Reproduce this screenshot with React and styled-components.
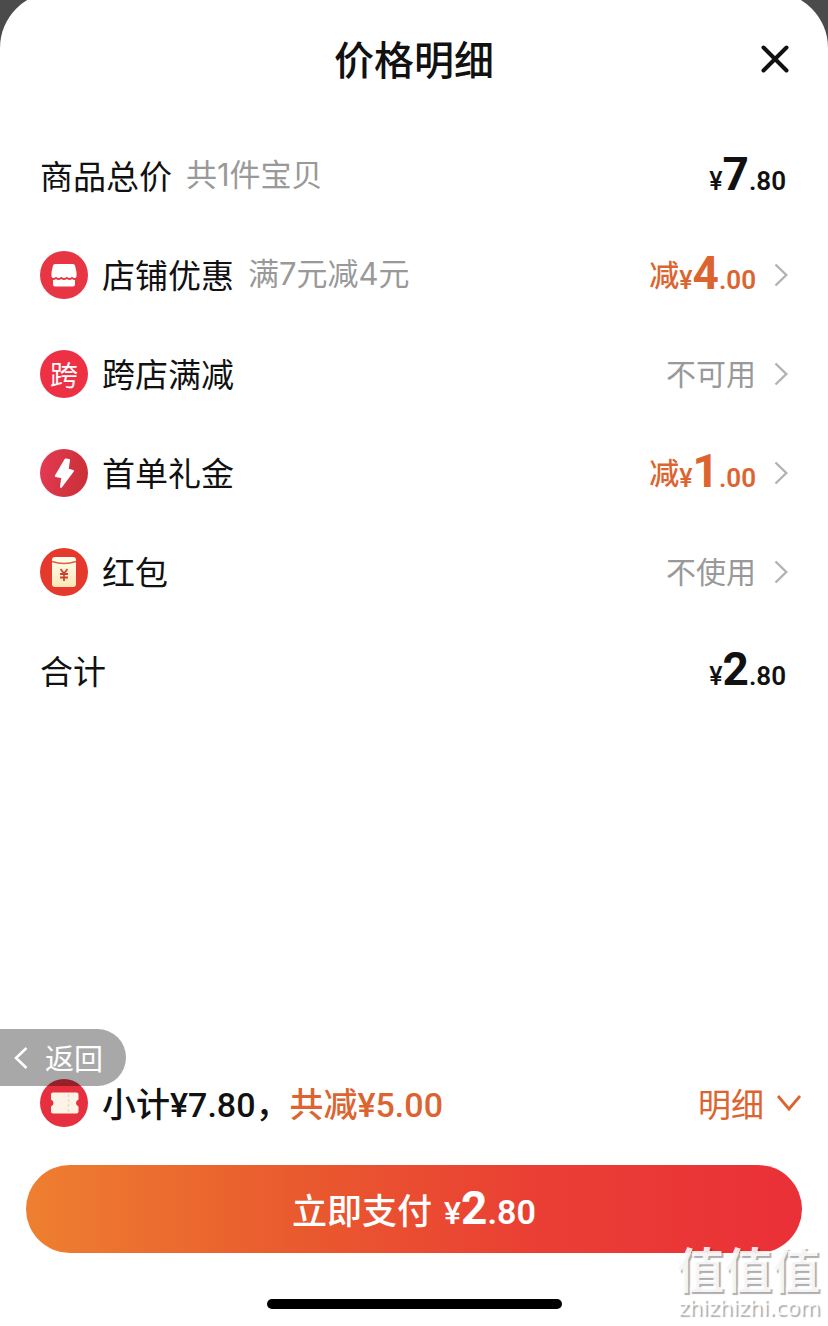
import styled, { createGlobalStyle } from "styled-components";

const GlobalStyle = createGlobalStyle`
  * {
    box-sizing: border-box;
  }

  body {
    margin: 0;
    background: #4b4b4b;
    color: #111;
    font-family: "Noto Sans CJK SC", sans-serif;
  }

  button {
    border: none;
    padding: 0;
    background: none;
    color: inherit;
    font-family: inherit;
    cursor: pointer;
  }
`;

const rows = [
  { label: "商品总价", note: "共1件宝贝", price: ["7", "80"] },
  { icon: "shop", label: "店铺优惠", note: "满7元减4元", off: ["4", "00"] },
  { icon: "cross", label: "跨店满减", status: "不可用" },
  { icon: "bolt", label: "首单礼金", off: ["1", "00"] },
  { icon: "packet", label: "红包", status: "不使用" },
  { label: "合计", price: ["2", "80"] },
];

const ShopIcon = () => (
  <svg width="48" height="48" viewBox="0 0 48 48" aria-hidden="true">
    <path
      d="M15 13h18q1.500 0 2 1.500l1.500 6.500v4q0 2-1.500 2-2 0-3-1.200-1.200 1.200-2.500 1.200t-2.600-1.200Q25.500 27 24 27t-2.700-1.200Q20 27 18.500 27T16 25.800Q15 27 13 27q-1.500 0-1.500-2v-4l1.500-6.500q.5-1.500 2-1.500z"
      fill="#fff"
    />
    <path
      d="M13 29q2 0 3-1 1.200 1 2.500 1t2.800-1q1.200 1 2.700 1t2.900-1q1.300 1 2.600 1t2.500-1q1 1 3 1v4.500q0 2-2 2H15q-2 0-2-2z"
      fill="#fff"
    />
  </svg>
);

const BoltIcon = () => (
  <svg width="48" height="48" viewBox="0 0 48 48" aria-hidden="true">
    <path
      d="M25.500 10.500 15.800 27l6.500 1.200L21 38 33 22l-5.400-1.500L29 11z"
      fill="#fff"
      stroke="#fff"
      strokeWidth="2"
      strokeLinejoin="round"
    />
  </svg>
);

const PacketIcon = () => (
  <svg width="48" height="48" viewBox="0 0 48 48" aria-hidden="true">
    <defs>
      <linearGradient id="packet" x1="0" y1="0" x2="0" y2="1">
        <stop offset="0" stopColor="#fffdf3" />
        <stop offset="1" stopColor="#fbe7b3" />
      </linearGradient>
    </defs>
    <rect x="12" y="9" width="24" height="30" rx="3" fill="url(#packet)" />
    <path d="M12 13.500q12 4 24 0" fill="none" stroke="#d9623f" strokeWidth="1.500" />
    <path
      d="m20.500 21 3.500 4.500 3.500-4.500M24 25.500V33M20 26h8M20 29.500h8"
      fill="none"
      stroke="#c9452f"
      strokeWidth="1.800"
    />
  </svg>
);

const TicketIcon = () => (
  <svg width="48" height="48" viewBox="0 0 48 48" aria-hidden="true">
    <path
      d="M13 13.500h23.500q2 0 2 2v5q-2.500 1-2.500 3.500t2.500 3.500v5q0 2-2 2H13q-2 0-2-2v-5q2.500-1 2.500-3.500T11 20.500v-5q0-2 2-2z"
      fill="#fdf3e6"
    />
    <path d="M28.500 15v18" stroke="#f0d9c9" strokeWidth="1.500" strokeDasharray="3 2" />
  </svg>
);

const Chevron = () => (
  <svg width="14" height="24" viewBox="0 0 14 24" aria-hidden="true">
    <path d="M1.500 1.500 12.300 12 1.500 22.500" fill="none" stroke="#b2b2b2" strokeWidth="2.400" />
  </svg>
);

const icons = {
  shop: <ShopIcon />,
  cross: "跨",
  bolt: <BoltIcon />,
  packet: <PacketIcon />,
};

const Price = ({ value, small }) => (
  <Amount>
    <Yen $small={small}>¥</Yen>
    <Whole>{value[0]}</Whole>
    <Cents $small={small}>.{value[1]}</Cents>
  </Amount>
);

const PriceRow = ({ row }) => {
  const content = (
    <>
      {row.icon && <Badge $tone={row.icon}>{icons[row.icon]}</Badge>}
      <Label>{row.label}</Label>
      {row.note && <Note>{row.note}</Note>}
      <Value>
        {row.status && <Status>{row.status}</Status>}
        {row.off && (
          <Discount>
            <Off>减</Off>
            <Price value={row.off} small />
          </Discount>
        )}
        {row.price && <Price value={row.price} small />}
        {row.icon && <Chevron />}
      </Value>
    </>
  );

  return <Item>{row.icon ? <RowButton type="button">{content}</RowButton> : <Row>{content}</Row>}</Item>;
};

const App = () => {
  return (
    <>
      <GlobalStyle />
      <Page>
        <Sheet>
          <Header>
            <Title>价格明细</Title>
            <Close type="button" aria-label="关闭">
              <svg width="28" height="28" viewBox="0 0 28 28" aria-hidden="true">
                <path d="m2.500 2.500 23 23m0-23-23 23" stroke="#111" strokeWidth="4" strokeLinecap="round" />
              </svg>
            </Close>
          </Header>
          <List>
            {rows.map((row) => (
              <PriceRow key={row.label} row={row} />
            ))}
          </List>
          <Footer>
            <Summary>
              <Badge $tone="ticket">
                <TicketIcon />
              </Badge>
              <Subtotal>小计¥7.80，</Subtotal>
              <Saved>共减¥5.00</Saved>
              <Detail type="button">
                明细
                <svg width="26" height="18" viewBox="0 0 26 18" aria-hidden="true">
                  <path d="m2 2 11 13L24 2" fill="none" stroke="#dc6430" strokeWidth="2.800" />
                </svg>
              </Detail>
            </Summary>
            <Pay type="button">
              立即支付
              <Price value={["2", "80"]} />
            </Pay>
            <HomeBar />
          </Footer>
        </Sheet>
        <Back type="button">
          <svg width="14" height="24" viewBox="0 0 14 24" aria-hidden="true">
            <path d="M12.500 2 2 12l10.500 10" fill="none" stroke="#fff" strokeWidth="2.600" />
          </svg>
          返回
        </Back>
        <Watermark>
          <Mark>值值值</Mark>
          <Site>zhizhizhi.com</Site>
        </Watermark>
      </Page>
    </>
  );
};

export default App;

const Page = styled.div`
  position: relative;
  display: flex;
  min-height: 100vh;
  overflow: hidden;
`;

const Sheet = styled.main`
  flex: 1;
  display: flex;
  flex-direction: column;
  margin-top: -8px;
  background: #fff;
  border-radius: 56px 56px 0 0;
`;

const Header = styled.header`
  display: grid;
  grid-template-columns: 1fr auto 1fr;
  align-items: center;
  height: 134px;
  padding: 0 39px;
`;

const Title = styled.h1`
  grid-column: 2;
  margin: 0;
  padding-bottom: 2px;
  font-size: 40px;
  font-weight: 500;
  line-height: 56px;
`;

const Close = styled.button`
  justify-self: end;
  display: flex;
`;

const List = styled.ul`
  margin: 0;
  padding: 0;
  list-style: none;
`;

const Item = styled.li`
  height: 99px;
`;

const Row = styled.div`
  display: flex;
  align-items: center;
  width: 100%;
  height: 100%;
  padding: 0 42px 0 40px;
`;

const RowButton = styled(Row).attrs({ as: "button" })`
  padding: 0 40px;
  text-align: left;
`;

const tones = {
  shop: "#e73543",
  cross: "#ee3044",
  bolt: "linear-gradient(100deg, #e43a54, #c92f35)",
  packet: "#e4392c",
  ticket: "#e6303f",
};

const Badge = styled.span`
  flex: none;
  display: flex;
  align-items: center;
  justify-content: center;
  width: 48px;
  height: 48px;
  margin-right: 14px;
  border-radius: 50%;
  background: ${(props) => tones[props.$tone]};
  color: #fff;
  font-size: 28px;
  line-height: 48px;
`;

const Label = styled.span`
  padding-bottom: 2px;
  font-size: 33px;
  line-height: 48px;
`;

const Note = styled.span`
  margin-left: 14px;
  padding-bottom: 2px;
  color: #999;
  font-family: Inter, "Noto Sans CJK SC", sans-serif;
  font-size: 31px;
  line-height: 48px;
`;

const Value = styled.span`
  display: flex;
  align-items: center;
  gap: 18px;
  margin-left: auto;
`;

const Status = styled.span`
  padding-bottom: 4px;
  color: #999;
  font-size: 30px;
  line-height: 48px;
`;

const Discount = styled.span`
  display: flex;
  align-items: center;
  color: #dc6430;
`;

const Off = styled.span`
  padding-bottom: 4px;
  font-size: 30px;
  font-weight: 500;
  line-height: 48px;
`;

const Amount = styled.span`
  padding-top: 8px;
  font-family: Roboto, sans-serif;
  font-weight: 600;
  line-height: 48px;
`;

const Yen = styled.span`
  font-size: ${(props) => (props.$small ? 25 : 32)}px;
  font-weight: 500;
`;

const Whole = styled.span`
  font-size: 46px;
  font-weight: 700;
`;

const Cents = styled.span`
  font-size: ${(props) => (props.$small ? 26 : 34)}px;
`;

const Footer = styled.footer`
  display: flex;
  flex-direction: column;
  margin-top: auto;
  padding: 0 26px 17px;
`;

const Summary = styled.div`
  display: flex;
  align-items: center;
  height: 48px;
  margin-bottom: 38px;
  padding-left: 14px;
`;

const Subtotal = styled.span`
  padding-top: 4px;
  font-family: Roboto, "Noto Sans CJK SC", sans-serif;
  font-size: 34px;
  font-weight: 500;
  line-height: 48px;
`;

const Saved = styled(Subtotal)`
  color: #dc6430;
`;

const Detail = styled.button`
  display: flex;
  align-items: center;
  gap: 12px;
  margin-left: auto;
  color: #dc6430;
  font-size: 33px;
  line-height: 48px;
`;

const Pay = styled.button`
  display: flex;
  align-items: baseline;
  justify-content: center;
  gap: 12px;
  height: 88px;
  border-radius: 44px;
  background: linear-gradient(90deg, #ee7f30, #e95a2e 35%, #ea3f34 65%, #ea3038);
  color: #fff;
  font-size: 35px;
  font-weight: 500;
  line-height: 88px;
`;

const HomeBar = styled.div`
  align-self: center;
  width: 36%;
  min-width: 295px;
  height: 10px;
  margin-top: 46px;
  border-radius: 5px;
  background: #000;
`;

const Back = styled.button`
  position: absolute;
  left: 0;
  bottom: 240px;
  display: flex;
  align-items: center;
  gap: 17px;
  height: 57px;
  padding: 0 23px 0 14px;
  border-radius: 0 29px 29px 0;
  background: rgba(0, 0, 0, 0.34);
  color: #fff;
  font-size: 29px;
  line-height: 57px;
`;

const Watermark = styled.div`
  position: absolute;
  right: 8px;
  bottom: 2px;
  display: flex;
  flex-direction: column;
  align-items: flex-end;
  color: rgba(255, 255, 255, 0.9);
  text-shadow: 2px 2px 1px rgba(0, 0, 0, 0.32);
  pointer-events: none;
`;

const Mark = styled.span`
  font-size: 48px;
  font-weight: 700;
  line-height: 50px;
`;

const Site = styled.span`
  font-family: "DejaVu Sans", sans-serif;
  font-size: 21px;
  line-height: 32px;
`;
